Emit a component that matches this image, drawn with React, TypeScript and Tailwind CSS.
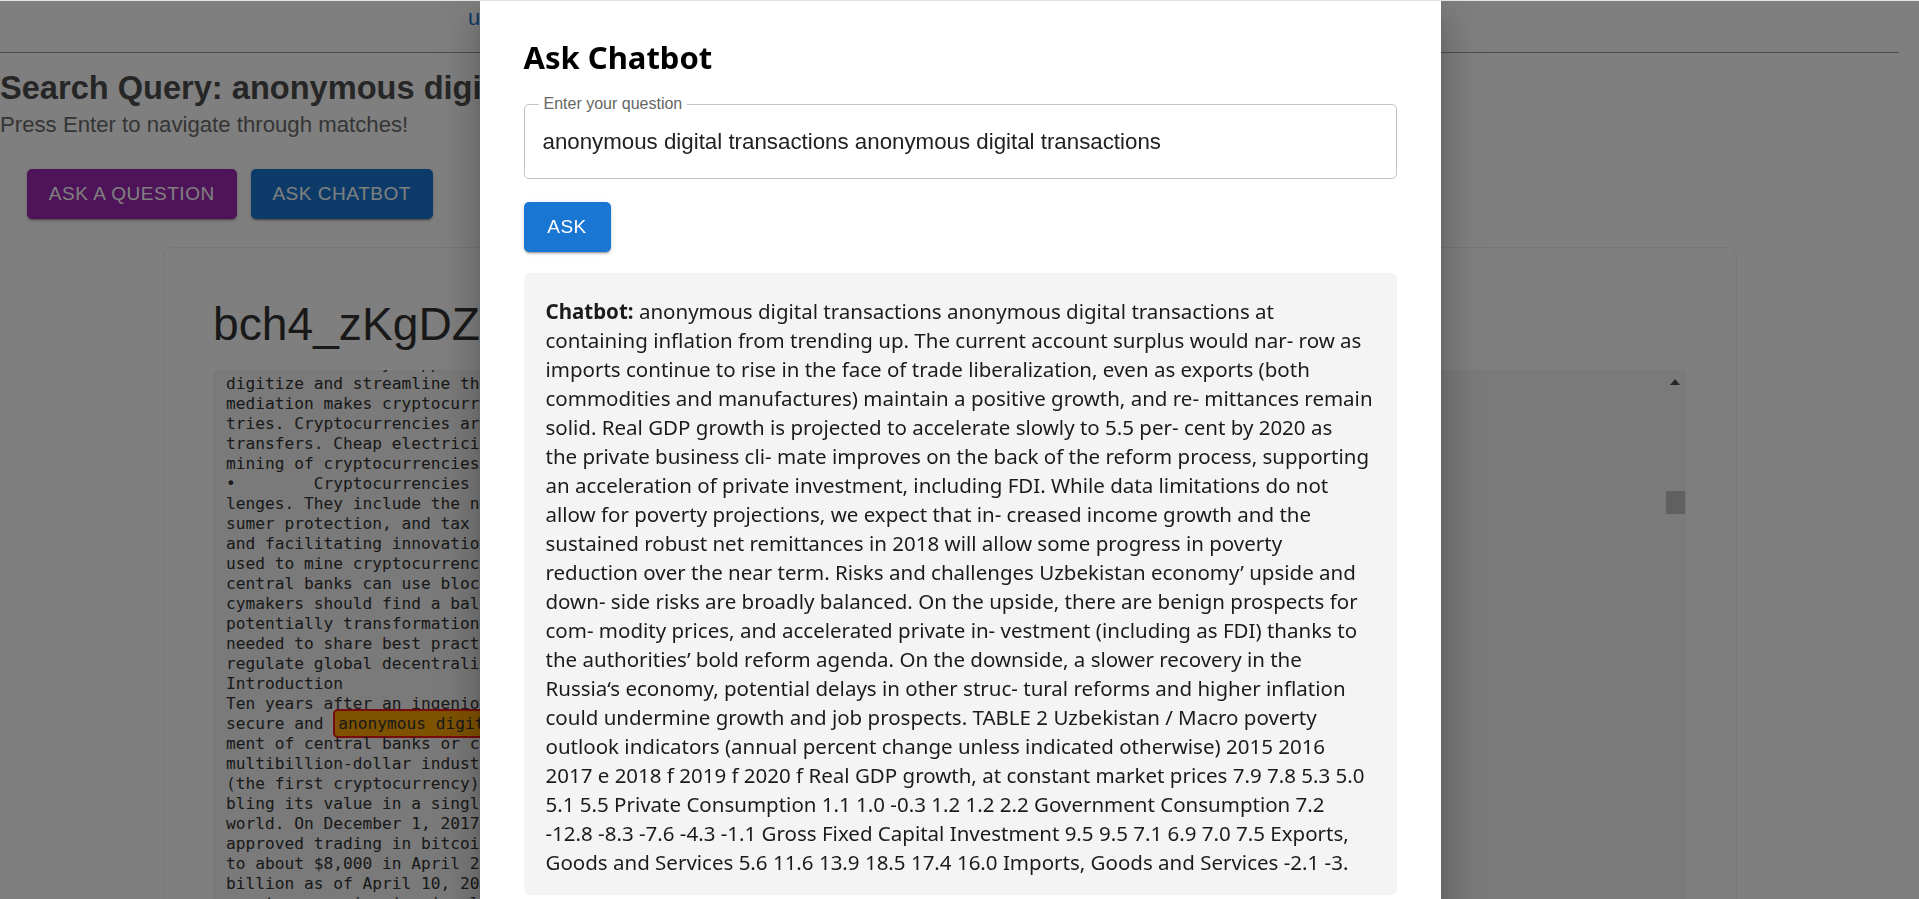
const monoBefore = [
  "which can readily support financial inclusion and help reduce costs",
  "digitize and streamline the processes of money transfers. Lack of inter-",
  "mediation makes cryptocurrencies attractive in developing coun-",
  "tries. Cryptocurrencies are also used for cross-border money",
  "transfers. Cheap electricity can attract the energy-intensive",
  "mining of cryptocurrencies in some countries.",
  "•        Cryptocurrencies also pose important policy chal-",
  "lenges. They include the need to ensure financial integrity, con-",
  "sumer protection, and tax compliance while preserving stability",
  "and facilitating innovation. The large amounts of electricity",
  "used to mine cryptocurrencies also raise environmental concerns. And",
  "central banks can use blockchain technology to issue digital fiat. Poli-",
  "cymakers should find a balance between managing the risks and the",
  "potentially transformational benefits. International cooperation is",
  "needed to share best practices and to effectively monitor and",
  "regulate global decentralized networks.",
  "Introduction",
  "Ten years after an ingenious paper by Satoshi Nakamoto proposed a",
];

const monoAfter = [
  "ment of central banks or commercial banks, cryptocurrencies became a",
  "multibillion-dollar industry. In 2017, the price of bitcoin",
  "(the first cryptocurrency) rose by almost 20 times, more than dou-",
  "bling its value in a single month, and attracting attention all over the",
  "world. On December 1, 2017, the Chicago Mercantile Exchange",
  "approved trading in bitcoin futures. Subsequently, the price fell",
  "to about $8,000 in April 2018, with a market capitalization of $137",
  "billion as of April 10, 2018. There are more than 1,500",
  "cryptocurrencies in circulation, and the market is still growing",
];

const answer = [
  "containing inflation from trending up. The current account surplus would nar- row as",
  "imports continue to rise in the face of trade liberalization, even as exports (both",
  "commodities and manufactures) maintain a positive growth, and re- mittances remain",
  "solid. Real GDP growth is projected to accelerate slowly to 5.5 per- cent by 2020 as",
  "the private business cli- mate improves on the back of the reform process, supporting",
  "an acceleration of private investment, including FDI. While data limitations do not",
  "allow for poverty projections, we expect that in- creased income growth and the",
  "sustained robust net remittances in 2018 will allow some progress in poverty",
  "reduction over the near term. Risks and challenges Uzbekistan economy’ upside and",
  "down- side risks are broadly balanced. On the upside, there are benign prospects for",
  "com- modity prices, and accelerated private in- vestment (including as FDI) thanks to",
  "the authorities’ bold reform agenda. On the downside, a slower recovery in the",
  "Russia‘s economy, potential delays in other struc- tural reforms and higher inflation",
  "could undermine growth and job prospects. TABLE 2 Uzbekistan / Macro poverty",
  "outlook indicators (annual percent change unless indicated otherwise) 2015 2016",
  "2017 e 2018 f 2019 f 2020 f Real GDP growth, at constant market prices 7.9 7.8 5.3 5.0",
  "5.1 5.5 Private Consumption 1.1 1.0 -0.3 1.2 1.2 2.2 Government Consumption 7.2",
  "-12.8 -8.3 -7.6 -4.3 -1.1 Gross Fixed Capital Investment 9.5 9.5 7.1 6.9 7.0 7.5 Exports,",
  "Goods and Services 5.6 11.6 13.9 18.5 17.4 16.0 Imports, Goods and Services -2.1 -3.",
];

function DocumentPage() {
  return (
    <div className="font-['Liberation_Sans',Arial,sans-serif]">
      <header className="mr-[20px] h-[53px] border-b border-[#999] pl-[468px] pt-[5px]">
        <a href="#" className="text-[22px] leading-[25px] text-[#1976d2]">
          user@example.com
        </a>
      </header>

      <h1 className="mt-[14.5px] whitespace-nowrap text-[32.6px] font-bold leading-[39px] text-[#4d4d4d]">
        Search Query: anonymous digital transactions
      </h1>
      <p className="mt-px text-[22.2px] leading-[33px] text-[#6b6b6b]">
        Press Enter to navigate through matches!
      </p>

      <div className="mt-[28.5px] flex gap-[14px] pl-[27px]">
        <button className="h-[49.5px] rounded-[5px] bg-[#9c27b0] px-[21.8px] text-[19px] uppercase tracking-[0.02857em] text-white shadow-[0_3px_1px_-2px_rgba(0,0,0,0.2),0_2px_2px_0_rgba(0,0,0,0.14),0_1px_5px_0_rgba(0,0,0,0.12)]">
          Ask a question
        </button>
        <button className="h-[49.5px] rounded-[5px] bg-[#1976d2] px-[21.8px] text-[19px] uppercase tracking-[0.02857em] text-white shadow-[0_3px_1px_-2px_rgba(0,0,0,0.2),0_2px_2px_0_rgba(0,0,0,0.14),0_1px_5px_0_rgba(0,0,0,0.12)]">
          Ask chatbot
        </button>
      </div>

      <div className="ml-[163px] mt-[28.5px] h-[800px] w-[1574px] rounded-[8px] border border-[#eee] px-[49px] pt-[48px]">
        <h2 className="whitespace-nowrap text-[46.2px] leading-[57px] text-[#333]">bch4_zKgDZ1x.pdf</h2>

        <div className="relative mt-[17px] h-[600px] overflow-hidden rounded-[5px] bg-[#f4f4f4]">
          <div className="-mt-[16px] whitespace-pre pl-[13px] font-['DejaVu_Sans_Mono',monospace] text-[16.2px] leading-[20px] text-[#333]">
            {monoBefore.map((l, i) => (
              <div key={i}>{l}</div>
            ))}
            <div>
              secure and{" "}
              <span className="rounded-[5px] border-2 border-[#f01818] bg-[#ffa500] px-[3px] py-[3px]">
                anonymous digital transactions
              </span>{" "}
              system without the involve-
            </div>
            {monoAfter.map((l, i) => (
              <div key={i}>{l}</div>
            ))}
          </div>

          {/* scrollbar */}
          <div className="absolute right-0 top-0 h-full w-[21px]">
            <div className="absolute left-[4px] top-[9px] h-0 w-0 border-x-[5.5px] border-b-[6px] border-x-transparent border-b-[#505050]" />
            <div className="absolute left-0 top-[121px] h-[23px] w-[19px] bg-[#c1c1c1]" />
          </div>
        </div>
      </div>
    </div>
  );
}

function ChatbotDialog() {
  return (
    <div className="fixed inset-0 z-20 flex justify-center bg-black/50 pl-px">
      <div className="h-[960px] w-[961px] shrink-0 bg-white px-[44px] pt-[39px] shadow-[0_11px_15px_-7px_rgba(0,0,0,0.2),0_24px_38px_3px_rgba(0,0,0,0.14),0_9px_46px_8px_rgba(0,0,0,0.12)]">
        <h2 className="font-['Noto_Sans',sans-serif] text-[31px] font-bold leading-[36px] text-black">
          Ask Chatbot
        </h2>

        <div className="relative mt-[29px] h-[75px] rounded-[5px] border border-[#c4c4c4] font-['Liberation_Sans',Arial,sans-serif]">
          <span className="absolute -top-[11px] left-[14px] bg-white px-[5px] text-[16px] leading-[20px] text-[#666]">
            Enter your question
          </span>
          <input
            readOnly
            defaultValue="anonymous digital transactions anonymous digital transactions"
            className="h-full w-full bg-transparent px-[18px] text-[22.3px] text-[#212121] outline-none"
          />
        </div>

        <button className="mt-[23px] block h-[50px] min-w-[87px] rounded-[5px] bg-[#1976d2] px-[21.8px] font-['Liberation_Sans',Arial,sans-serif] text-[19px] tracking-[0.02857em] text-white shadow-[0_3px_1px_-2px_rgba(0,0,0,0.2),0_2px_2px_0_rgba(0,0,0,0.14),0_1px_5px_0_rgba(0,0,0,0.12)]">
          ASK
        </button>

        <div className="mt-[21px] rounded-[6px] bg-[#f4f4f4] px-[22px] pb-[18px] pt-[24px] font-['Noto_Sans',sans-serif] text-[20.5px] leading-[29px] text-[#1b1b1b]">
          <p className="whitespace-nowrap">
            <b>Chatbot:</b> anonymous digital transactions anonymous digital transactions at
            {answer.map((l, i) => (
              <span key={i}>
                <br />
                {l}
              </span>
            ))}
          </p>
        </div>
      </div>
    </div>
  );
}

export default function App() {
  return (
    <div className="relative h-[899px] overflow-hidden bg-white">
      <DocumentPage />
      <ChatbotDialog />
      <div className="fixed inset-x-0 top-0 z-30 h-px bg-[#e3e3e3]" />
    </div>
  );
}
